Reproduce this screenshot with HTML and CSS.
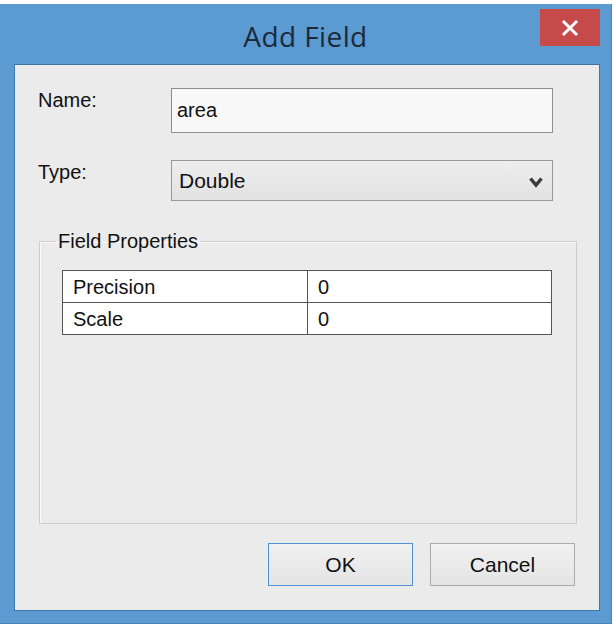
FILE: index.html
```html
<!DOCTYPE html>
<html>
<head>
<meta charset="utf-8">
<link rel="stylesheet" href="styles.css">
</head>
<body>
<div class="window">
  <div class="titlebar">
    <span class="title">Add Field</span>
    <button class="close" aria-label="Close">
      <svg width="18" height="18" viewBox="0 0 18 18"><path d="M3 3 L15 15 M15 3 L3 15" stroke="#fff" stroke-width="3" stroke-linecap="square" fill="none"/></svg>
    </button>
  </div>
  <div class="panel">
    <div class="row">
      <label class="lbl">Name:</label>
      <div class="input">area</div>
    </div>
    <div class="row row-type">
      <label class="lbl">Type:</label>
      <div class="select">
        <span>Double</span>
        <svg class="chev" width="16" height="12" viewBox="0 0 16 12"><path d="M2.5 2.5 L8 9 L13.5 2.5" stroke="#3a3a3a" stroke-width="3.4" fill="none"/></svg>
      </div>
    </div>
    <fieldset class="group">
      <legend>Field Properties</legend>
      <table class="props">
        <tr><td class="k">Precision</td><td class="v">0</td></tr>
        <tr><td class="k">Scale</td><td class="v">0</td></tr>
      </table>
    </fieldset>
    <div class="buttons">
      <button class="btn btn-ok">OK</button>
      <button class="btn">Cancel</button>
    </div>
  </div>
</div>
</body>
</html>
```
FILE: styles.css
```css
html, body {
  margin: 0;
  padding: 0;
  background: #ffffff;
}
body {
  width: 616px;
  height: 626px;
  overflow: hidden;
  font-family: "Liberation Sans", Arial, sans-serif;
}
.window {
  margin-top: 4px;
  width: 612px;
  height: 620px;
  background: #5c9ad2;
  box-sizing: border-box;
  border-right: 1px solid #4a80b6;
  border-bottom: 1px solid #4a80b6;
  display: flex;
  flex-direction: column;
}
.titlebar {
  position: relative;
  height: 60px;
  flex: none;
  display: flex;
  align-items: center;
  justify-content: center;
}
.title {
  font-family: "Open Sans", "Noto Sans", sans-serif;
  font-size: 28px;
  color: #1b2a3a;
  margin-top: 4px;
  letter-spacing: 0.4px;
}
.close {
  position: absolute;
  top: 5px;
  right: 11px;
  width: 60px;
  height: 37px;
  border: none;
  padding: 0;
  background: #c74a4b;
  display: flex;
  align-items: center;
  justify-content: center;
}
.panel {
  margin: 0 11px 0 14px;
  height: 547px;
  box-sizing: border-box;
  border: 1px solid #3f74a8;
  background: #ebebeb;
  padding: 23px 24px 0 23px;
  display: flex;
  flex-direction: column;
}
.row {
  display: flex;
  align-items: flex-start;
}
.row-type {
  margin-top: 27px;
}
.lbl {
  width: 133px;
  font-size: 20px;
  line-height: 24px;
  color: #111;
}
.input {
  width: 382px;
  height: 45px;
  box-sizing: border-box;
  border: 1px solid #8e8e8e;
  background: #f8f8f8;
  font-size: 20px;
  color: #111;
  padding-left: 5px;
  display: flex;
  align-items: center;
}
.select {
  width: 382px;
  height: 41px;
  box-sizing: border-box;
  border: 1px solid #999;
  background: linear-gradient(#eeeeee, #e2e2e2);
  font-size: 21px;
  color: #111;
  padding: 0 8px 0 7px;
  display: flex;
  align-items: center;
  justify-content: space-between;
}
.chev {
  margin-top: 2px;
}
.group {
  margin: 29px 0 0 1px;
  width: 538px;
  height: 294px;
  box-sizing: border-box;
  padding: 0;
  border: 1px solid #cdcdcd;
  box-shadow: inset 1px 1px 0 #fafafa;
}
.group legend {
  margin-left: 16px;
  padding: 0 2px;
  font-size: 20px;
  line-height: 22px;
  color: #111;
  letter-spacing: 0;
}
.props {
  margin: 18px 0 0 22px;
  width: 490px;
  border-collapse: collapse;
  background: #fff;
  font-size: 20px;
  color: #111;
}
.props td {
  border: 1px solid #555;
  padding: 0 0 0 10px;
  height: 32px;
  box-sizing: border-box;
  line-height: 30px;
}
.props td.k {
  width: 245px;
}
.buttons {
  margin-top: 19px;
  display: flex;
  justify-content: flex-end;
  gap: 17px;
}
.btn {
  width: 145px;
  height: 43px;
  box-sizing: border-box;
  border: 1px solid #ababab;
  background: linear-gradient(#f1f1f1, #e4e4e4);
  font-family: "Liberation Sans", Arial, sans-serif;
  font-size: 21px;
  color: #111;
  padding: 0;
}
.btn-ok {
  border: 1px solid #4f93d6;
}
```
